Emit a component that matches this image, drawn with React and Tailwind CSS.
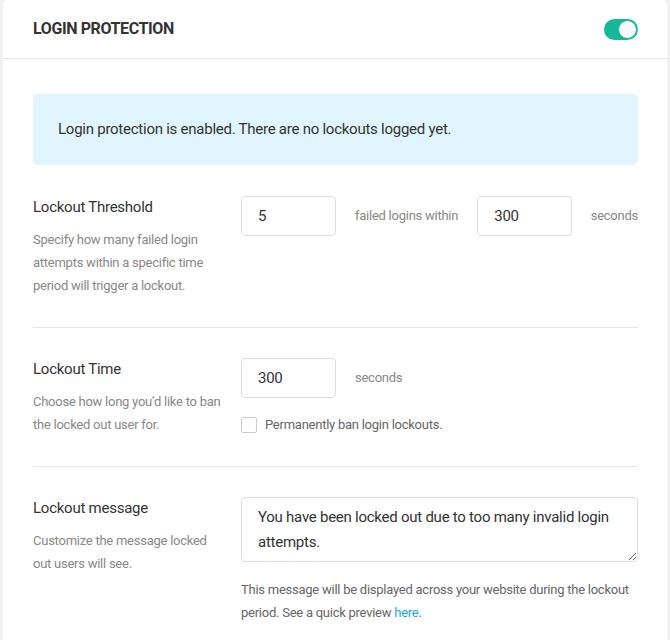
import React from "react";

export default function App() {
  return (
    <div className="min-h-[640px] w-[670px] bg-[#f1f1f1] pl-[3px] pr-[3px]" style={{ fontFamily: "Roboto, 'Liberation Sans', sans-serif" }}>
      <div className="bg-white rounded-t-[5px] min-h-[640px] tracking-[-0.25px]">
        {/* Header */}
        <div className="h-[59px] border-b border-[#e6e6e6] flex items-center justify-between pl-[30px] pr-[29px]">
          <h2 className="text-[16px] font-bold text-[#333] uppercase tracking-[-0.4px] leading-none">Login Protection</h2>
          <button className="w-[34px] h-[21px] rounded-full bg-[#17b897] relative">
            <span className="absolute right-[1px] top-[1px] w-[19px] h-[19px] rounded-full bg-[#fafafa] border border-[#17b897]"></span>
          </button>
        </div>

        <div className="pl-[30px] pr-[29px] pt-[35px]">
          {/* Notice */}
          <div className="h-[71px] rounded-[5px] bg-[#e0f5fd] flex items-center pl-[25px] text-[15px] text-[#333]">
            Login protection is enabled. There are no lockouts logged yet.
          </div>

          {/* Row 1 */}
          <div className="flex pt-[31px] pb-[30px] border-b border-[#e6e6e6]">
            <div className="w-[208px] shrink-0 pr-[17px]">
              <div className="text-[15px] leading-[22px] text-[#333]">Lockout Threshold</div>
              <p className="mt-[10px] text-[13px] leading-[23px] text-[#888]">Specify how many failed login attempts within a specific time period will trigger a lockout.</p>
            </div>
            <div className="flex-1 flex items-start">
              <input readOnly value="5" className="w-[95px] h-[40px] border border-[#ddd] rounded-[4px] pl-[16px] text-[15px] text-[#333] outline-none" />
              <span className="h-[40px] flex items-center ml-[19px] text-[13px] text-[#888]">failed logins within</span>
              <input readOnly value="300" className="ml-[19px] w-[95px] h-[40px] border border-[#ddd] rounded-[4px] pl-[16px] text-[15px] text-[#333] outline-none" />
              <span className="h-[40px] flex items-center ml-auto text-[13px] text-[#888]">seconds</span>
            </div>
          </div>

          {/* Row 2 */}
          <div className="flex pt-[30px] pb-[30px] border-b border-[#e6e6e6]">
            <div className="w-[208px] shrink-0 pr-[17px]">
              <div className="text-[15px] leading-[22px] text-[#333]">Lockout Time</div>
              <p className="mt-[10px] text-[13px] leading-[23px] text-[#888]">Choose how long you’d like to ban the locked out user for.</p>
            </div>
            <div className="flex-1">
              <div className="flex items-center">
                <input readOnly value="300" className="w-[95px] h-[40px] border border-[#ddd] rounded-[4px] pl-[16px] text-[15px] text-[#333] outline-none" />
                <span className="ml-[19px] text-[13px] text-[#888]">seconds</span>
              </div>
              <label className="mt-[19px] flex items-center">
                <span className="w-[16px] h-[16px] border border-[#ccc] rounded-[2px] bg-white shrink-0"></span>
                <span className="ml-[8px] text-[13px] leading-[16px] text-[#666]">Permanently ban login lockouts.</span>
              </label>
            </div>
          </div>

          {/* Row 3 */}
          <div className="flex pt-[30px] pb-[20px]">
            <div className="w-[208px] shrink-0 pr-[17px]">
              <div className="text-[15px] leading-[22px] text-[#333]">Lockout message</div>
              <p className="mt-[10px] text-[13px] leading-[23px] text-[#888]">Customize the message locked out users will see.</p>
            </div>
            <div className="flex-1">
              <textarea
                readOnly
                value="You have been locked out due to too many invalid login attempts."
                className="block w-full h-[65px] border border-[#ddd] rounded-[4px] pl-[16px] pr-[10px] pt-[7px] text-[15px] leading-[25px] tracking-[-0.25px] text-[#333] outline-none resize-y"
              />
              <p className="mt-[16px] text-[13px] leading-[23px] text-[#666]">
                This message will be displayed across your website during the lockout period. See a quick preview <a className="text-[#17a8e3]">here</a>.
              </p>
            </div>
          </div>
        </div>
      </div>
    </div>
  );
}
